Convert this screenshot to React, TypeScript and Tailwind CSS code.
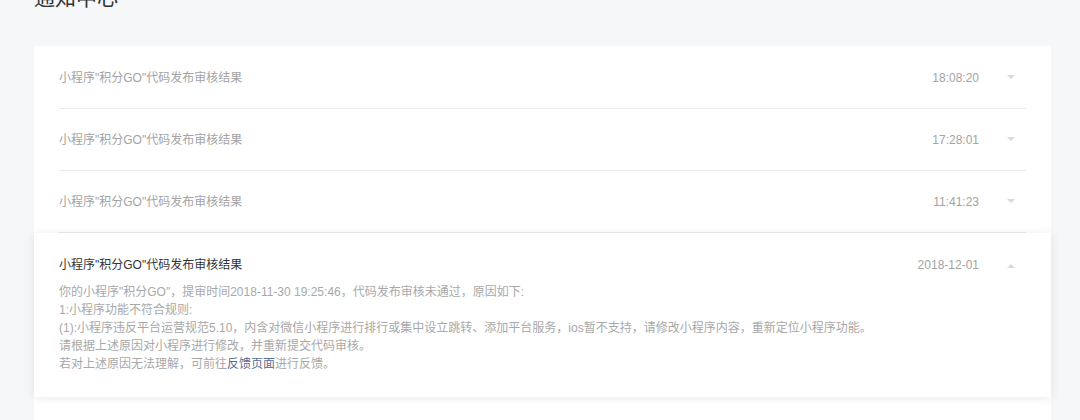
import type { ReactNode } from "react";

/* ------------------------------------------------------------------ */
/*  Data                                                              */
/* ------------------------------------------------------------------ */
const TITLE = "小程序\"积分GO\"代码发布审核结果";

const items = [
  { id: 1, time: "18:08:20" },
  { id: 2, time: "17:28:01" },
  { id: 3, time: "11:41:23" },
];

/* ------------------------------------------------------------------ */
/*  Caret                                                             */
/* ------------------------------------------------------------------ */
function Caret({ up }: { up?: boolean }) {
  return (
    <svg width="8" height="5" viewBox="0 0 8 5" className="text-[#dadada]">
      {up ? <path d="M0 5 L4 1 L8 5 Z" fill="currentColor" /> : <path d="M0 0 L4 4 L8 0 Z" fill="currentColor" />}
    </svg>
  );
}

/* ------------------------------------------------------------------ */
/*  Row                                                               */
/* ------------------------------------------------------------------ */
function Row({ time }: { time: string }) {
  return (
    <div className="mx-[25px] h-[62px] flex items-center border-b border-[#ececec]">
      <span className="flex-1 text-[12px] text-[#a3a3a3]">{TITLE}</span>
      <span className="text-[12px] text-[#a3a3a3]">{time}</span>
      <span className="w-[47px] flex justify-end pr-[11px]"><Caret /></span>
    </div>
  );
}

function Expanded({ children }: { children: ReactNode }) {
  return (
    <div className="relative bg-white shadow-[0_1px_10px_rgba(0,0,0,0.09)] px-[25px] pt-[24px] pb-[24px]">
      <div className="flex items-center h-[16px]">
        <span className="flex-1 text-[12px] text-[#333]">{TITLE}</span>
        <span className="text-[12px] text-[#a3a3a3]">2018-12-01</span>
        <span className="w-[47px] flex justify-end pr-[11px]"><Caret up /></span>
      </div>
      <div className="mt-[10px] text-[12px] leading-[18px] text-[#a8a8a8]">{children}</div>
    </div>
  );
}

export default function App() {
  return (
    <div
      className="min-h-[420px] h-[420px] overflow-hidden bg-[#f6f7f9] pl-[34px] pr-[29px]"
      style={{ fontFamily: '"Liberation Sans", "Noto Sans CJK SC", sans-serif' }}
    >
      <h1 className="mt-[-16px] h-[28px] leading-[28px] text-[21px] text-[#333] font-normal">通知中心</h1>
      <div className="mt-[34px] bg-white">
        <div className="pt-[1px]">
          {items.map((it) => (
            <Row key={it.id} time={it.time} />
          ))}
        </div>
        <Expanded>
          <p>你的小程序"积分GO"，提审时间2018-11-30 19:25:46，代码发布审核未通过，原因如下:</p>
          <p>1:小程序功能不符合规则:</p>
          <p>(1):小程序违反平台运营规范5.10，内含对微信小程序进行排行或集中设立跳转、添加平台服务，ios暂不支持，请修改小程序内容，重新定位小程序功能。</p>
          <p>请根据上述原因对小程序进行修改，并重新提交代码审核。</p>
          <p>若对上述原因无法理解，可前往<span className="text-[#576b95]">反馈页面</span>进行反馈。</p>
        </Expanded>
        <div className="h-[60px] mt-[2px] bg-white" />
      </div>
    </div>
  );
}
